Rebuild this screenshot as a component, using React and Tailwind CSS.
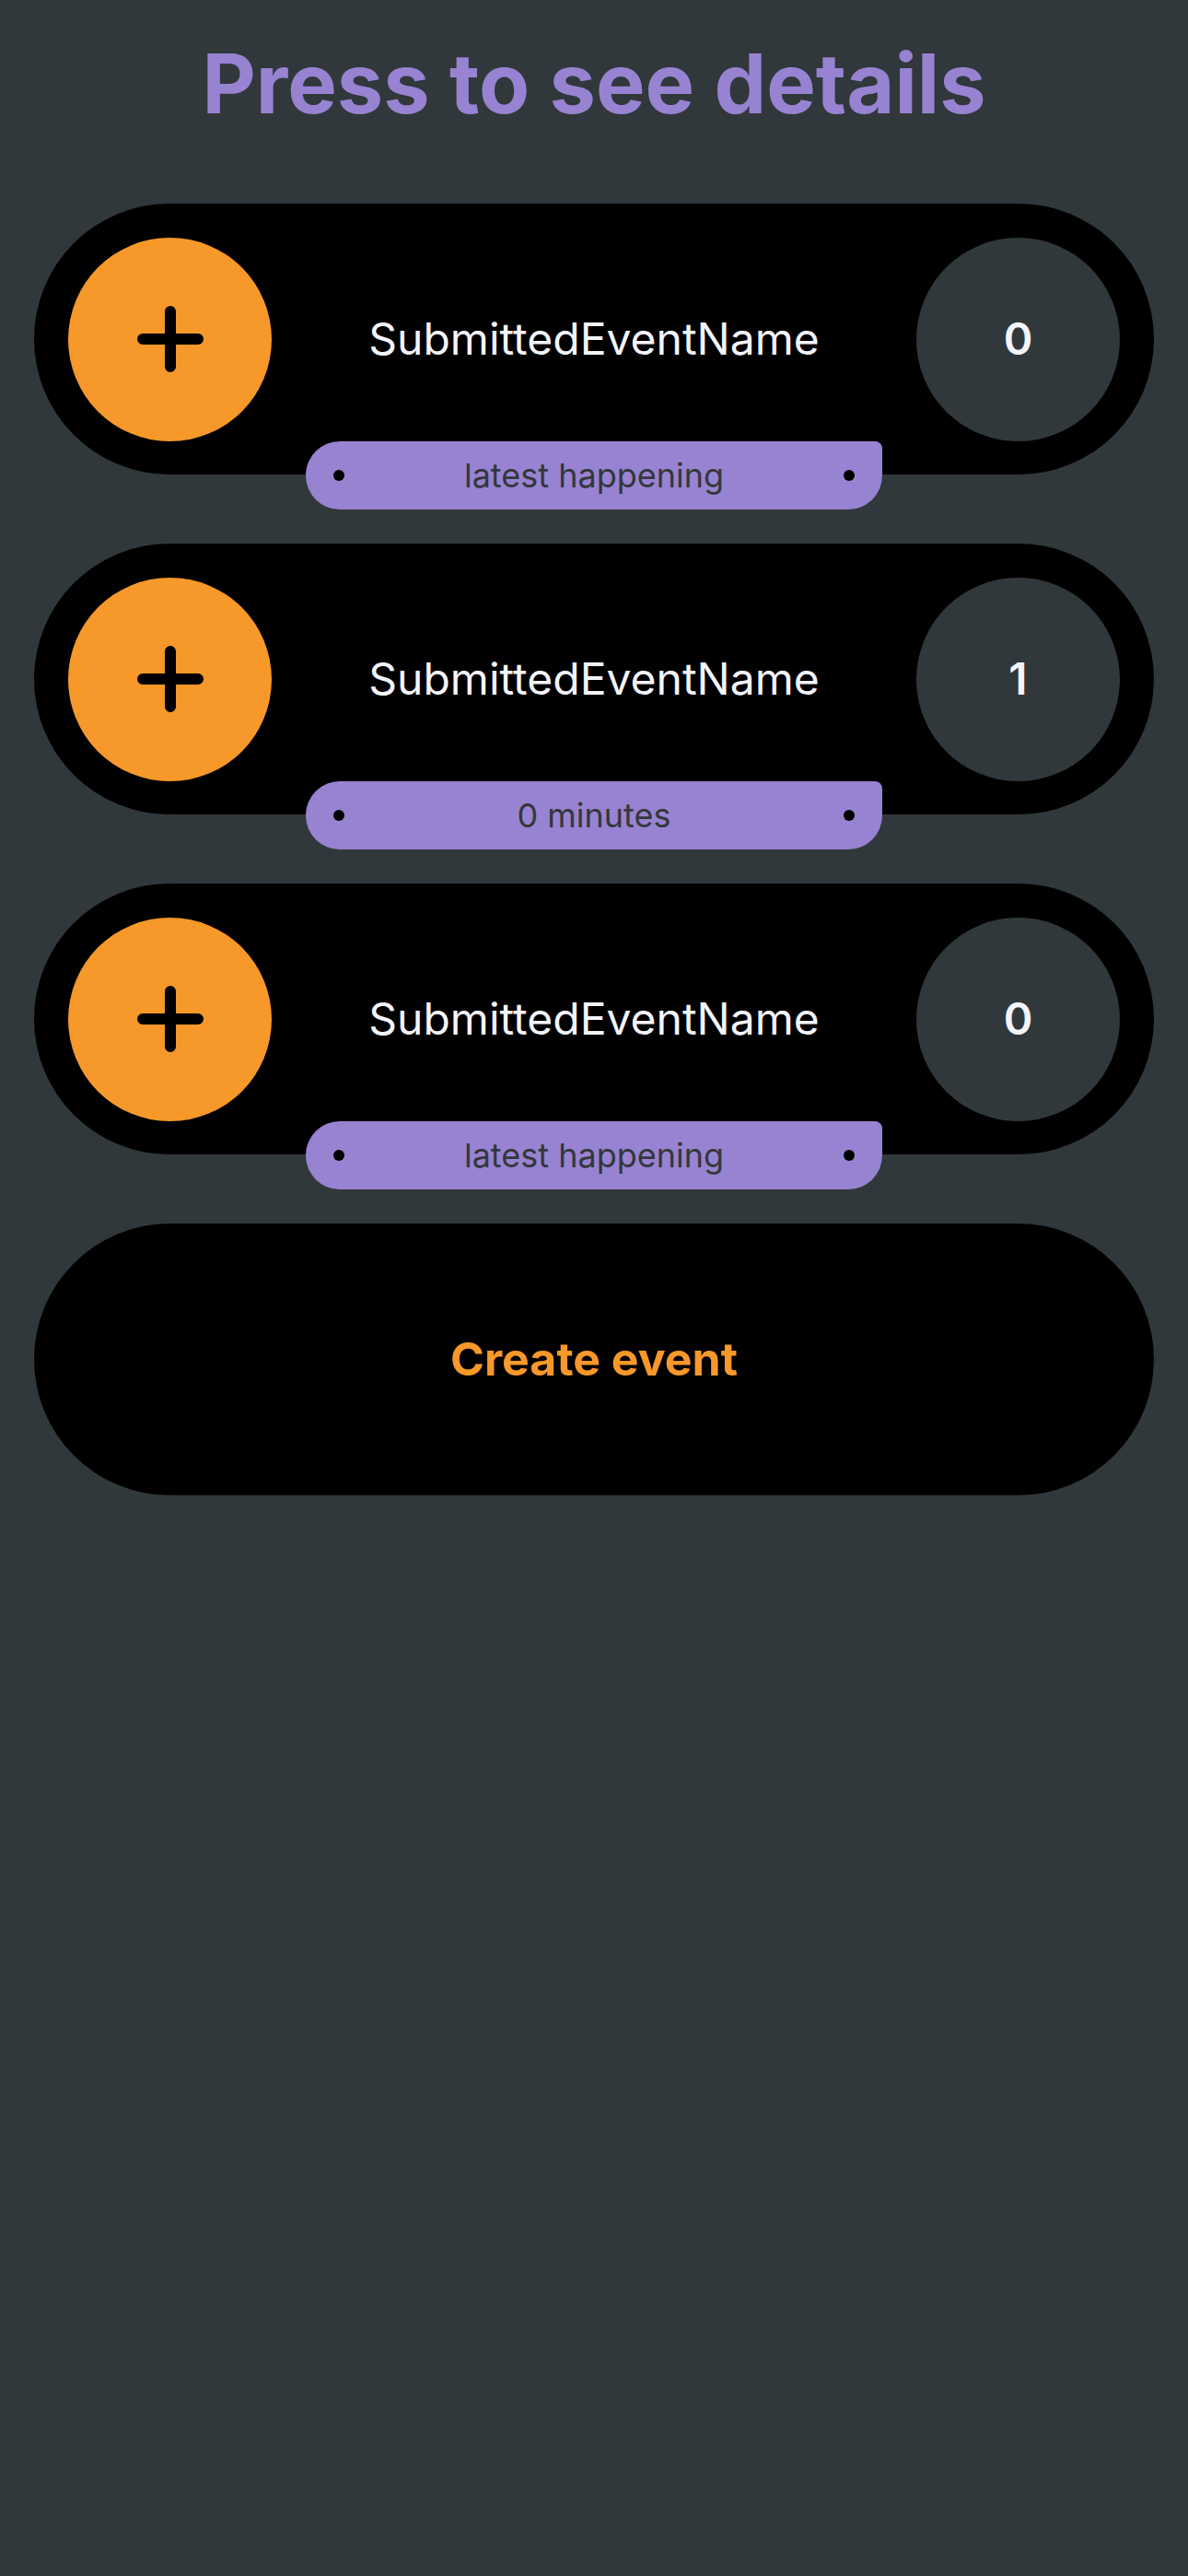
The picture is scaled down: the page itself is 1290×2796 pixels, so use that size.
const events = [
    { name: "SubmittedEventName", count: 0, label: "latest happening" },
    { name: "SubmittedEventName", count: 1, label: "0 minutes" },
    { name: "SubmittedEventName", count: 0, label: "latest happening" },
];

function PlusIcon() {
    return (
        <svg width="72" height="72" viewBox="0 0 72 72" fill="none">
            <path d="M36 6v60M6 36h60" stroke="#000" strokeWidth="12" strokeLinecap="round" />
        </svg>
    );
}

function EventCard({ name, count, label }) {
    return (
        <div className="relative h-[294px] rounded-full bg-black flex items-center px-[37px]">
            <button className="w-[221px] h-[221px] shrink-0 rounded-full bg-[#f7982a] flex items-center justify-center">
                <PlusIcon />
            </button>
            <div className="flex-1 text-center text-[48px] text-[#f4f4fb] leading-none">{name}</div>
            <div className="w-[221px] h-[221px] shrink-0 rounded-full bg-[#31383b] flex items-center justify-center text-[48px] font-semibold text-[#f4f4fb]">
                {count}
            </div>
            {/* happening tag */}
            <div className="absolute left-1/2 -translate-x-1/2 bottom-[-38px] w-[626px] h-[74px] bg-[#9883d2] rounded-l-[37px] rounded-br-[37px] rounded-tr-[8px] flex items-center justify-between px-[30px]">
                <span className="w-3 h-3 rounded-full bg-black" />
                <span className="text-[36px] text-[#34373b] leading-none">{label}</span>
                <span className="w-3 h-3 rounded-full bg-black" />
            </div>
        </div>
    );
}

export default function App() {
    return (
        <div className="w-[1290px] h-[2796px] bg-[#31383b] font-['Inter',sans-serif] overflow-hidden">
            <h1 className="pt-[46px] text-center text-[90px] leading-none font-bold text-[#9883d2]">Press to see details</h1>
            <div className="mt-[85px] px-[37px] flex flex-col gap-[75px]">
                {events.map((e, i) => (
                    <EventCard key={i} {...e} />
                ))}
                <button className="h-[295px] rounded-full bg-black flex items-center justify-center text-[50px] font-bold text-[#f7982a]">
                    Create event
                </button>
            </div>
        </div>
    );
}
